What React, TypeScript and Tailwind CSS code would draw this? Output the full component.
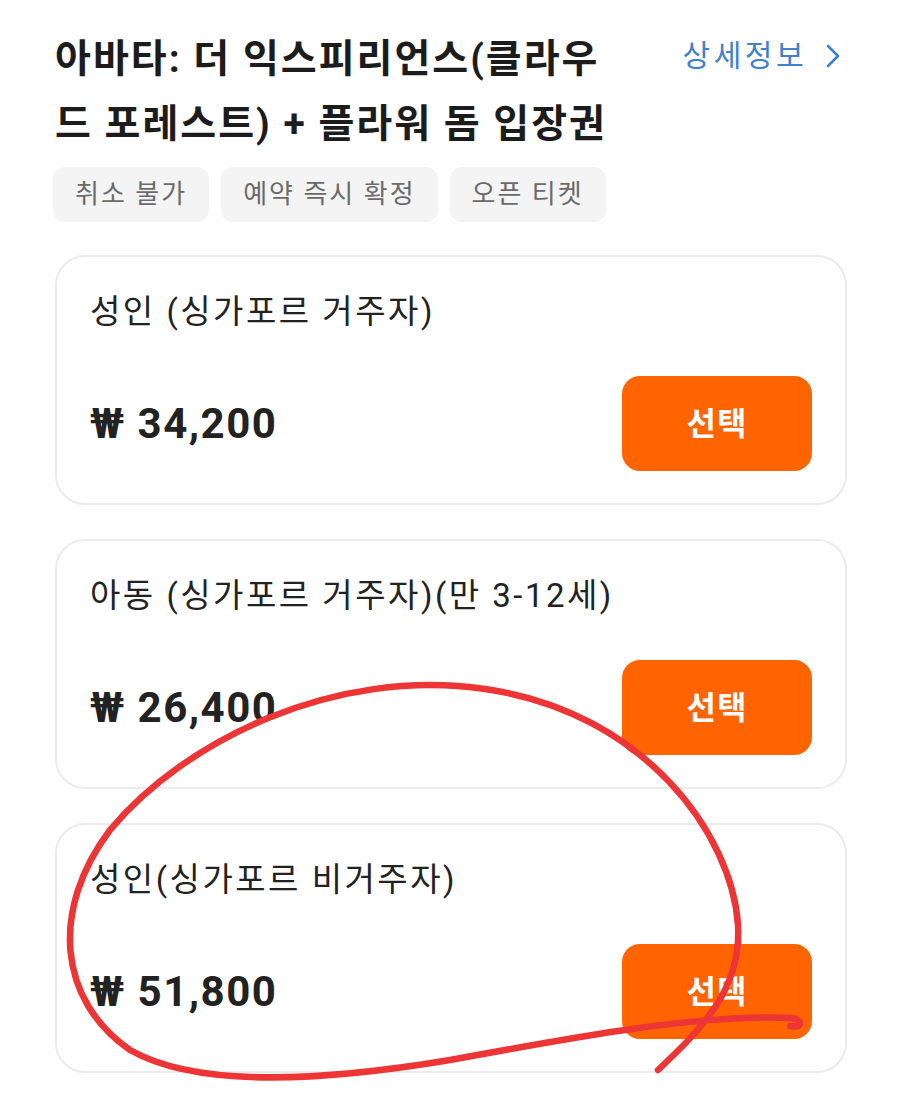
import React from "react";

type Ticket = {
  name: string;
  price: string;
};

const tickets: Ticket[] = [
  { name: "성인 (싱가포르 거주자)", price: "₩ 34,200" },
  { name: "아동 (싱가포르 거주자)(만 3-12세)", price: "₩ 26,400" },
  { name: "성인(싱가포르 비거주자)", price: "₩ 51,800" },
];

const tags = ["취소 불가", "예약 즉시 확정", "오픈 티켓"];

function TicketCard({ ticket }: { ticket: Ticket }) {
  return (
    <div className="h-[250px] rounded-[30px] border-2 border-[#ebebeb] bg-white pl-[33px] pr-[33px] pt-[35px]">
      <div className="text-[33px] leading-[40px] tracking-[2.5px] text-[#222]">{ticket.name}</div>
      <div className="mt-[44px] flex items-center justify-between">
        <div className="text-[42px] font-bold tracking-[1.5px] text-[#222]">{ticket.price}</div>
        <button className="flex h-[95px] w-[190px] items-center justify-center rounded-[18px] bg-[#ff6400] text-[32px] font-bold tracking-[1px] text-white">
          선택
        </button>
      </div>
    </div>
  );
}

export default function App() {
  return (
    <div
      className="relative min-h-[1101px] w-[900px] overflow-hidden bg-white"
      style={{ fontFamily: 'Roboto, "Noto Sans CJK KR", sans-serif' }}
    >
      <div className="px-[53px] pt-[27px]">
        <div className="flex items-start justify-between">
          <h1 className="w-[560px] pl-[2px] text-[39px] font-bold leading-[65px] tracking-[2px] text-[#1c1c1c]">
            아바타: 더 익스피리언스(클라우드 포레스트) + 플라워 돔 입장권
          </h1>
          <a className="mt-[6px] mr-[6px] flex items-center gap-[18px] text-[30px] tracking-[3.5px] text-[#3f80cf]">
            상세정보
            <svg width="16" height="26" viewBox="0 0 16 26" fill="none">
              <path d="M3 3l10 10L3 23" stroke="#3f80cf" strokeWidth="2.6" strokeLinecap="round" strokeLinejoin="round" />
            </svg>
          </a>
        </div>
        <div className="mt-[10px] flex gap-[12px]">
          {tags.map((t) => (
            <span
              key={t}
              className="flex h-[55px] items-center rounded-[12px] bg-[#f4f4f4] px-[22px] text-[26px] tracking-[2px] text-[#6a6a6a]"
            >
              {t}
            </span>
          ))}
        </div>
        <div className="mt-[33px] flex flex-col gap-[34px] pl-[2px]">
          {tickets.map((t) => (
            <TicketCard key={t.price} ticket={t} />
          ))}
        </div>
      </div>
      <svg
        className="pointer-events-none absolute left-0 top-0"
        width="900"
        height="1101"
        viewBox="0 0 900 1101"
        fill="none"
      >
        <path
          d="M658 1070 C700 1030 742 990 738 925 C732 835 645 712 485 689 C335 667 185 740 110 830 C50 910 58 1000 130 1050 C200 1090 330 1080 450 1060 C580 1036 700 1014 792 1018 C804 1021 802 1028 790 1026"
          stroke="#ee3535"
          strokeWidth="6.5"
          strokeLinecap="round"
          strokeLinejoin="round"
        />
      </svg>
    </div>
  );
}
